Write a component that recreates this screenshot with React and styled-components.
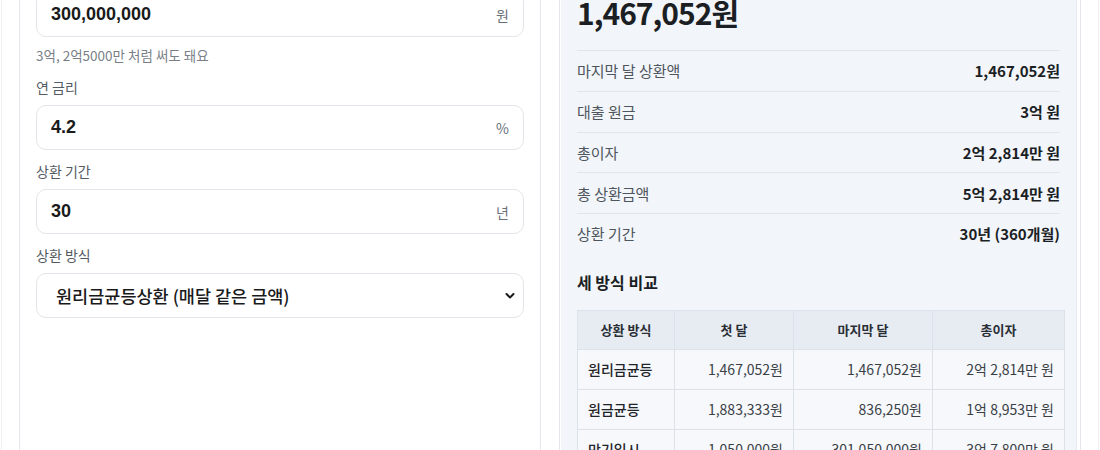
import React from "react";
import styled, { createGlobalStyle } from "styled-components";

const GlobalStyle = createGlobalStyle`
  html, body { margin: 0; padding: 0; background: #ffffff; }
  body {
    font-family: "Noto Sans CJK KR", "Liberation Sans", sans-serif;
    color: #1f2328;
    overflow: hidden;
  }
`;

const Page = styled.div`
  margin: 0 1px;
  border-left: 1px solid #eef0f2;
  border-right: 1px solid #eef0f2;
  padding: 0 16px 0 17px;
  height: 450px;
  overflow: hidden;
`;

const Columns = styled.div`
  display: grid;
  grid-template-columns: 522px 522px;
  gap: 18px;
  margin-top: -50px;
`;

const Card = styled.section`
  border: 1px solid #e4e7eb;
  background: #fff;
  min-height: 560px;
  padding: ${(p) => (p.$flush ? "0" : "16px")};
  display: flex;
  flex-direction: column;
`;

const Form = styled.div`
  display: flex;
  flex-direction: column;
  gap: 14px;
`;

const Field = styled.div`
  display: flex;
  flex-direction: column;
`;

const Label = styled.label`
  font-size: 14px;
  line-height: 15px;
  color: #555b63;
  margin-bottom: 10px;
`;

const InputBox = styled.div`
  display: flex;
  align-items: center;
  height: 45px;
  box-sizing: border-box;
  border: 1px solid #e2e5e9;
  border-radius: 10px;
  padding: 0 14px;
  background: #fff;
`;

const Input = styled.input`
  flex: 1;
  border: none;
  outline: none;
  background: transparent;
  font-family: "Liberation Sans", "Noto Sans CJK KR", sans-serif;
  font-size: 18px;
  font-weight: 700;
  color: #1a1a1a;
  padding: 0;
`;

const Suffix = styled.span`
  font-size: 14px;
  color: #6b7078;
`;

const Hint = styled.p`
  margin: 10px 0 3px;
  font-size: 13.5px;
  line-height: 16px;
  color: #7a7f87;
`;

const SelectWrap = styled.div`
  position: relative;
`;

const Select = styled.select`
  width: 100%;
  height: 45px;
  appearance: none;
  border: 1px solid #e2e5e9;
  border-radius: 10px;
  background: #fff;
  padding: 0 40px 0 19px;
  font-family: "Noto Sans CJK KR", sans-serif;
  font-size: 17.5px;
  font-weight: 500;
  color: #1a1a1a;
  outline: none;
`;

const Chevron = styled.svg`
  position: absolute;
  right: 9px;
  top: 19px;
  pointer-events: none;
`;

const Panel = styled.div`
  flex: 1;
  background: #f2f5fa;
  margin: 1px 3px 0 1px;
  border-right: 1px solid #e6eaf0;
  padding: 18px 16px 16px;
`;

const BigLabel = styled.div`
  font-size: 14px;
  line-height: 20px;
  color: #555b63;
  margin-bottom: 4px;
`;

const BigValue = styled.div`
  font-size: 30px;
  line-height: 36px;
  font-weight: 700;
  letter-spacing: -1px;
  color: #1b1f24;
`;

const Summary = styled.div`
  margin-top: 20px;
`;

const Row = styled.div`
  display: flex;
  justify-content: space-between;
  align-items: center;
  box-sizing: border-box;
  height: 40.75px;
  border-top: 1px solid #e1e5ea;
  font-size: 15px;
`;

const RowLabel = styled.span`
  color: #4f555d;
`;

const RowValue = styled.span`
  font-weight: 700;
  color: #1b1f24;
`;

const SectionTitle = styled.h3`
  margin: 18px 0 18px;
  font-size: 16px;
  line-height: 20px;
  font-weight: 700;
  color: #1b1f24;
`;

const Table = styled.table`
  width: 487px;
  border-collapse: collapse;
  table-layout: fixed;
`;

const Th = styled.th`
  height: 38px;
  padding: 0;
  background: #e7ecf3;
  border: 1px solid #dce2ea;
  font-size: 13px;
  font-weight: 700;
  color: #2a2f36;
  text-align: center;
`;

const Td = styled.td`
  height: 39px;
  padding: 0 10px;
  background: #f6f8fb;
  border: 1px solid #dce2ea;
  font-size: 14px;
  text-align: ${(p) => (p.$name ? "left" : "right")};
  font-weight: ${(p) => (p.$name ? 500 : 400)};
  color: ${(p) => (p.$name ? "#1f242a" : "#3a3f46")};
  white-space: nowrap;
`;

const fields = [
  { label: "대출 금액", value: "300,000,000", suffix: "원", hint: "3억, 2억5000만 처럼 써도 돼요" },
  { label: "연 금리", value: "4.2", suffix: "%" },
  { label: "상환 기간", value: "30", suffix: "년" },
];

const summary = [
  ["마지막 달 상환액", "1,467,052원"],
  ["대출 원금", "3억 원"],
  ["총이자", "2억 2,814만 원"],
  ["총 상환금액", "5억 2,814만 원"],
  ["상환 기간", "30년 (360개월)"],
];

const compare = [
  ["원리금균등", "1,467,052원", "1,467,052원", "2억 2,814만 원"],
  ["원금균등", "1,883,333원", "836,250원", "1억 8,953만 원"],
  ["만기일시", "1,050,000원", "301,050,000원", "3억 7,800만 원"],
];

export default function App() {
  return (
    <>
      <GlobalStyle />
      <Page>
        <Columns>
          <Card>
            <Form>
              {fields.map((f) => (
                <Field key={f.label}>
                  <Label>{f.label}</Label>
                  <InputBox>
                    <Input defaultValue={f.value} readOnly />
                    <Suffix>{f.suffix}</Suffix>
                  </InputBox>
                  {f.hint && <Hint>{f.hint}</Hint>}
                </Field>
              ))}
              <Field>
                <Label>상환 방식</Label>
                <SelectWrap>
                  <Select defaultValue="equal">
                    <option value="equal">원리금균등상환 (매달 같은 금액)</option>
                    <option value="principal">원금균등상환</option>
                    <option value="bullet">만기일시상환</option>
                  </Select>
                  <Chevron width="10" height="8" viewBox="0 0 10 8">
                    <path d="M1.5 2 L5 5.5 L8.5 2" fill="none" stroke="#1a1a1a" strokeWidth="2" strokeLinecap="round" strokeLinejoin="round" />
                  </Chevron>
                </SelectWrap>
              </Field>
            </Form>
          </Card>

          <Card $flush>
            <Panel>
              <BigLabel>매달 상환액</BigLabel>
              <BigValue>1,467,052원</BigValue>
              <Summary>
                {summary.map(([k, v]) => (
                  <Row key={k}>
                    <RowLabel>{k}</RowLabel>
                    <RowValue>{v}</RowValue>
                  </Row>
                ))}
              </Summary>
              <SectionTitle>세 방식 비교</SectionTitle>
              <Table>
                <colgroup>
                  <col style={{ width: 97 }} />
                  <col style={{ width: 119 }} />
                  <col style={{ width: 139 }} />
                  <col style={{ width: 132 }} />
                </colgroup>
                <thead>
                  <tr>
                    <Th>상환 방식</Th>
                    <Th>첫 달</Th>
                    <Th>마지막 달</Th>
                    <Th>총이자</Th>
                  </tr>
                </thead>
                <tbody>
                  {compare.map((r) => (
                    <tr key={r[0]}>
                      <Td $name>{r[0]}</Td>
                      <Td>{r[1]}</Td>
                      <Td>{r[2]}</Td>
                      <Td>{r[3]}</Td>
                    </tr>
                  ))}
                </tbody>
              </Table>
            </Panel>
          </Card>
        </Columns>
      </Page>
    </>
  );
}
